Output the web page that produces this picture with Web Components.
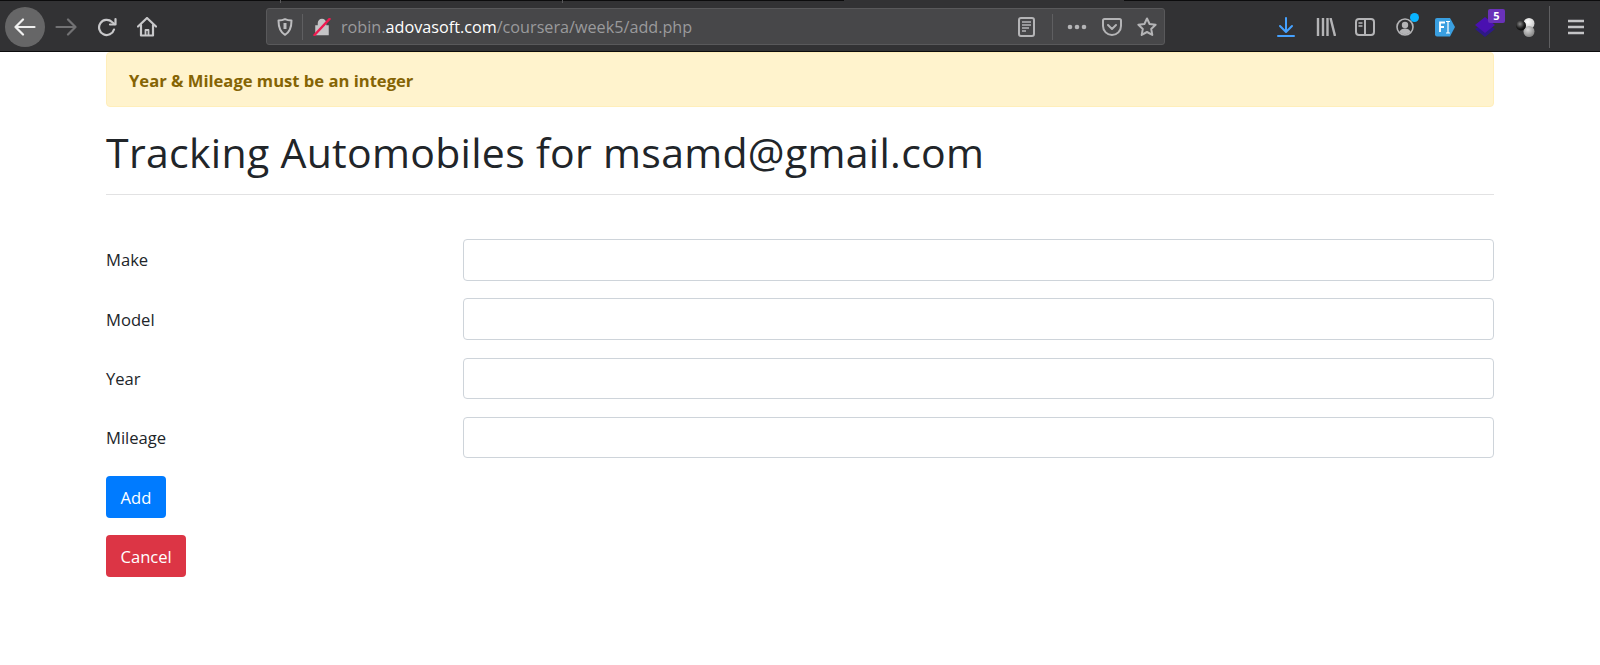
<!DOCTYPE html>
<html>
<head>
<meta charset="utf-8">
<title>Tracking Automobiles</title>
<style>
  html, body { margin: 0; padding: 0; background: #fff; }
  body { font-family: "Open Sans", "Noto Sans", sans-serif; color: #212529; overflow: hidden; }
</style>
</head>
<body>
<browser-bar></browser-bar>
<page-main>
  <alert-box>Year &amp; Mileage must be an integer</alert-box>
  <page-title>Tracking Automobiles for msamd@gmail.com</page-title>
  <car-form>
    <form-row>Make</form-row>
    <form-row>Model</form-row>
    <form-row>Year</form-row>
    <form-row>Mileage</form-row>
    <form-button>Add</form-button>
    <form-button kind="danger">Cancel</form-button>
  </car-form>
</page-main>

<script>
class BrowserBar extends HTMLElement {
    constructor() {
        super();
        this.attachShadow({ mode: 'open' });
        this.shadowRoot.innerHTML = `
            <style>
                :host { display: flex; align-items: center; position: relative; height: 52px; box-sizing: border-box; padding-top: 1px; background: #323234; border-top: 1px solid #0c0c0d; border-bottom: 1px solid #0c0c0d; color: #bdbdbf; font-family: "Open Sans", sans-serif; }
                svg { display: block; flex: none; }
                .gap { position: absolute; left: 844px; top: -1px; width: 280px; height: 1px; background: #323234; }
                .tick { position: absolute; top: -1px; width: 1px; height: 3px; background: #5a5a5c; }
                .nav { display: flex; align-items: center; width: 266px; flex: none; }
                .back { width: 40px; height: 40px; margin-left: 5px; border-radius: 50%; background: #666667; display: flex; align-items: center; justify-content: center; flex: none; }
                .fwd { margin-left: 10px; }
                .reload { margin-left: 20px; }
                .home { margin-left: 20px; }
                .url { width: 899px; height: 37px; box-sizing: border-box; flex: none; display: flex; align-items: center; background: #474749; border: 1px solid #59595b; border-radius: 3px; }
                .shield { margin-left: 10px; }
                .sep { width: 1px; height: 26px; background: #5f5f61; flex: none; }
                .url .sep1 { margin-left: 9px; }
                .lock { margin-left: 10px; }
                .addr { margin-left: 10px; font-size: 16.2px; color: #9a9a9c; white-space: nowrap; flex: 1; }
                .addr b { font-weight: 400; color: #fff; }
                .reader { margin-right: 17px; }
                .url .sep2 { margin-right: 14px; }
                .dots { margin-right: 15px; }
                .pocket { margin-right: 15px; }
                .star { margin-right: 7px; }
                .right { display: flex; align-items: center; margin-left: 112px; position: relative; height: 100%; }
                .badge { position: absolute; left: 211px; top: 7px; width: 17px; height: 14px; background: #6a32b8; color: #fff; border-radius: 2px; font: 700 11px/14px "Open Sans", sans-serif; text-align: center; }
                .dot { position: absolute; left: 133px; top: 11px; width: 9px; height: 9px; border-radius: 50%; background: #0ab4ff; }
            </style>
            <span class="gap"></span>
            <span class="tick" style="left:280px"></span>
            <span class="tick" style="left:562px"></span>
            <div class="nav">
                <div class="back">
                    <svg width="22" height="22" viewBox="0 0 22 22" fill="none" stroke="#f0f0f0" stroke-width="2.200" stroke-linecap="round" stroke-linejoin="round"><path d="M20.500 11H1.500M9 3.500 1.500 11 9 18.500"/></svg>
                </div>
                <svg class="fwd" width="22" height="22" viewBox="0 0 22 22" fill="none" stroke="#727274" stroke-width="2.200" stroke-linecap="round" stroke-linejoin="round"><path d="M1.500 11h19M13 3.500l7.500 7.500-7.500 7.500"/></svg>
                <svg class="reload" width="20" height="20" viewBox="0 0 20 20" fill="none" stroke="#c8c8ca" stroke-width="2.200" stroke-linecap="round" stroke-linejoin="round"><path d="M17 12.500A7.600 7.600 0 1 1 15 5l2.500 2"/><path d="M18.500 2v5.500H13"/></svg>
                <svg class="home" width="20" height="20" viewBox="0 0 20 20" fill="none" stroke="#c8c8ca" stroke-width="2.200" stroke-linejoin="round" stroke-linecap="round"><path d="M1 9.500 10 1l9 8.500M4 8v10.500h12V8"/><path d="M8.500 18v-5h3v5" stroke-width="1.800"/></svg>
            </div>
            <div class="url">
                <svg class="shield" width="16" height="18" viewBox="0 0 16 18" fill="none" stroke="#bdbdbf" stroke-width="2" stroke-linejoin="round"><path d="M8 1.200c2 1 4 1.300 6.500 1.300 0 7-1.500 11.500-6.500 14.300C3 14 1.500 9.500 1.500 2.500 4 2.500 6 2.200 8 1.200Z"/><path d="M8 5v6" stroke-width="3"/></svg>
                <div class="sep sep1"></div>
                <svg class="lock" width="18" height="18" viewBox="0 0 18 18"><path d="M3 8h12v8.500H3Z M5.500 8V5a3.500 3.500 0 0 1 7 0v3" fill="#c4c4c6" stroke="#c4c4c6" stroke-width="1.500"/><path d="M1.500 17 16.500 1" stroke="#ee1a50" stroke-width="2.500" stroke-linecap="round"/></svg>
                <div class="addr">robin.<b>adovasoft.com</b>/coursera/week5/add.php</div>
                <svg class="reader" width="17" height="20" viewBox="0 0 17 20" fill="none"><rect x="1" y="1" width="15" height="18" rx="2" stroke="#b4b4b6" stroke-width="2"/><path d="M4 5h9M4 8h9M4 11h7M4 14h4" stroke="#b4b4b6" stroke-width="1.500"/></svg>
                <div class="sep sep2"></div>
                <svg class="dots" width="20" height="6" viewBox="0 0 20 6" fill="#b4b4b6"><circle cx="3" cy="3" r="2.300"/><circle cx="10" cy="3" r="2.300"/><circle cx="17" cy="3" r="2.300"/></svg>
                <svg class="pocket" width="20" height="18" viewBox="0 0 20 18" fill="none" stroke="#b4b4b6" stroke-width="2" stroke-linecap="round" stroke-linejoin="round"><path d="M1 2.500A1.500 1.500 0 0 1 2.500 1h15A1.500 1.500 0 0 1 19 2.500V8a9 9 0 0 1-18 0Z"/><path d="m6 7 4 4 4-4"/></svg>
                <svg class="star" width="20" height="20" viewBox="0 0 20 20" fill="none" stroke="#b4b4b6" stroke-width="2" stroke-linejoin="round"><path d="m10 1.500 2.600 5.500 6 .8-4.400 4.100 1.100 6L10 15l-5.300 2.900 1.100-6L1.400 7.800l6-.8Z"/></svg>
            </div>
            <div class="right">
                <svg width="18" height="20" viewBox="0 0 18 20" fill="none" stroke="#45a1ff" stroke-width="2" stroke-linecap="round" stroke-linejoin="round"><path d="M9 1v13M3 9l6 6 6-6M1 19h16"/></svg>
                <svg style="margin-left:21px" width="20" height="18" viewBox="0 0 20 18" fill="none" stroke="#b4b4b6" stroke-width="2.400"><path d="M2 0v18M7 0v18M11.500 0v18M14.500 0l4.500 18"/></svg>
                <svg style="margin-left:19px" width="20" height="18" viewBox="0 0 20 18" fill="none" stroke="#b4b4b6" stroke-width="2"><rect x="1" y="1" width="18" height="16" rx="3"/><path d="M10 1v16"/><path d="M3.500 5h4M3.500 8h4" stroke-width="1.500"/></svg>
                <svg style="margin-left:21px" width="18" height="18" viewBox="0 0 18 18" fill="#b4b4b6" stroke="#b4b4b6"><circle cx="9" cy="9" r="8" fill="none" stroke-width="1.600"/><circle cx="9" cy="7" r="3.200" stroke="none"/><path d="M3.500 14c1-3 3-3.500 5.500-3.500s4.500.5 5.500 3.500a8 8 0 0 1-11 0Z" stroke="none"/></svg>
                <span class="dot"></span>
                <svg style="margin-left:21px" width="20" height="20" viewBox="0 0 20 20"><path d="M2 1h13l5 9-5 9.500H2a2 2 0 0 1-2-2V3a2 2 0 0 1 2-2Z" fill="#3a9fe0"/><path d="M5 15V5.500h5M5 10h4" stroke="#fff" stroke-width="1.800" fill="none"/><path d="M11 4.500h4M13 4.500v11.500M11 16h4" stroke="#fff" stroke-width="1.200" fill="none"/></svg>
                <svg style="margin-left:20px" width="20" height="20" viewBox="0 0 20 20"><path d="M0 12 10 6l10 6-10 8Z" fill="#2d1a86"/><path d="M0 8 10 0l10 8-10 8Z" fill="#4a10b0"/></svg>
                <span class="badge">5</span>
                <svg style="margin-left:20px" width="20" height="20" viewBox="0 0 20 20">
                    <defs>
                        <radialGradient id="w" cx=".4" cy=".35" r=".7"><stop offset="0" stop-color="#fff"/><stop offset="1" stop-color="#c4c4c4"/></radialGradient>
                        <radialGradient id="g" cx=".4" cy=".35" r=".7"><stop offset="0" stop-color="#d8d8d8"/><stop offset="1" stop-color="#808080"/></radialGradient>
                        <radialGradient id="k" cx=".4" cy=".35" r=".7"><stop offset="0" stop-color="#8a8a8a"/><stop offset=".6" stop-color="#222"/><stop offset="1" stop-color="#000"/></radialGradient>
                    </defs>
                    <circle cx="14" cy="6.500" r="5.500" fill="url(#w)"/><circle cx="14" cy="14.500" r="5.500" fill="url(#g)"/><circle cx="6" cy="8.500" r="5" fill="url(#k)"/>
                </svg>
                <div class="sep" style="margin-left:14px;height:42px"></div>
                <svg style="margin-left:18px" width="16" height="16" viewBox="0 0 16 16" stroke="#c4c4c6" stroke-width="2.400"><path d="M0 2h16M0 8h16M0 14h16"/></svg>
            </div>
        `;
    }
}

class PageMain extends HTMLElement {
    constructor() {
        super();
        this.attachShadow({ mode: 'open' });
        this.shadowRoot.innerHTML = `
            <style>
                :host { display: block; margin: 0 106px; color: #212529; font-family: "Open Sans", "Noto Sans", sans-serif; font-size: 16.6px; line-height: 24px; }
            </style>
            <slot></slot>
        `;
    }
}

class AlertBox extends HTMLElement {
    constructor() {
        super();
        this.attachShadow({ mode: 'open' });
        this.shadowRoot.innerHTML = `
            <style>
                :host { display: block; box-sizing: border-box; height: 55px; padding: 16px 22px; background: #fff3cd; border: 1px solid #ffeeba; border-radius: 4px; color: #856404; font-weight: 700; }
            </style>
            <slot></slot>
        `;
    }
}

class PageTitle extends HTMLElement {
    constructor() {
        super();
        this.attachShadow({ mode: 'open' });
        this.shadowRoot.innerHTML = `
            <style>
                :host { display: block; height: 88px; box-sizing: border-box; padding-top: 21px; border-bottom: 1px solid #e2e2e3; font-size: 41px; letter-spacing: .3px; line-height: 48px; font-weight: 400; }
            </style>
            <slot></slot>
        `;
    }
}

class CarForm extends HTMLElement {
    constructor() {
        super();
        this.attachShadow({ mode: 'open' });
        this.shadowRoot.innerHTML = `
            <style>
                :host { display: flex; flex-direction: column; align-items: stretch; gap: 17.75px; padding-top: 44px; }
            </style>
            <slot></slot>
        `;
    }
}

class FormRow extends HTMLElement {
    constructor() {
        super();
        this.attachShadow({ mode: 'open' });
        this.shadowRoot.innerHTML = `
            <style>
                :host { display: flex; align-items: center; height: 41.5px; }
                label { width: 357px; flex: none; padding-top: 1px; }
                input { flex: 1; min-width: 0; height: 41.5px; box-sizing: border-box; background: #fff; border: 1px solid #ced4da; border-radius: 4px; padding: 6px 12px; font: inherit; }
            </style>
            <label><slot></slot></label>
            <input type="text">
        `;
    }
}

class FormButton extends HTMLElement {
    constructor() {
        super();
        this.attachShadow({ mode: 'open' });
        this.shadowRoot.innerHTML = `
            <style>
                :host { display: block; align-self: flex-start; box-sizing: border-box; height: 41.5px; padding: 10px 14.5px 0; border-radius: 4px; background: #007bff; color: #fff; }
                :host([kind="danger"]) { background: #dc3545; }
            </style>
            <slot></slot>
        `;
    }
}

customElements.define('browser-bar', BrowserBar);
customElements.define('page-main', PageMain);
customElements.define('alert-box', AlertBox);
customElements.define('page-title', PageTitle);
customElements.define('car-form', CarForm);
customElements.define('form-row', FormRow);
customElements.define('form-button', FormButton);
</script>
</body>
</html>
